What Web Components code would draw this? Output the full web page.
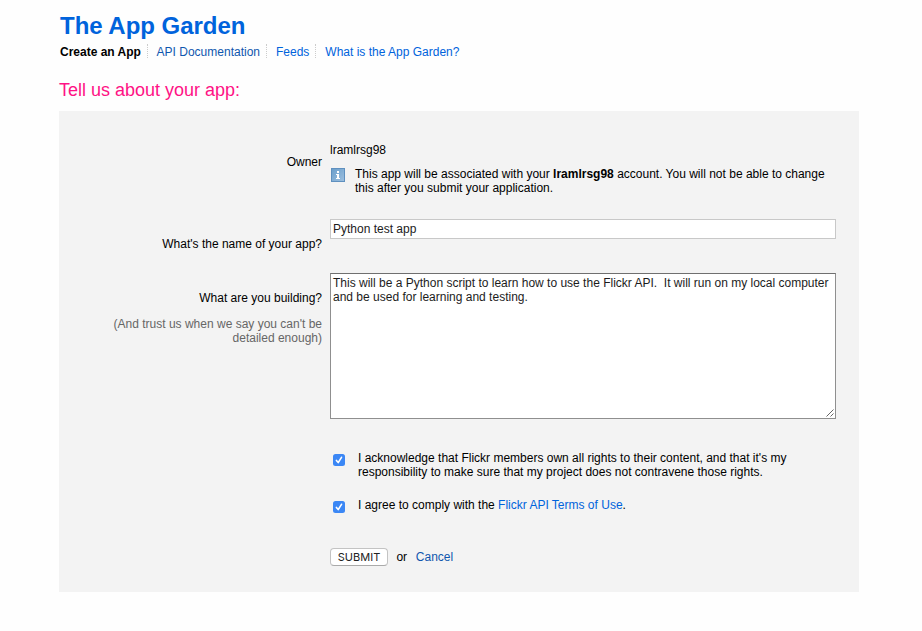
<!DOCTYPE html>
<html lang="en">
<head>
<meta charset="utf-8">
<title>The App Garden</title>
<style>
  body { margin: 0; width: 922px; height: 631px; overflow: hidden; background: #fefefe; color: #000;
    font: 12px/14px "Liberation Sans", Arial, sans-serif; }
</style>
</head>
<body>
<garden-page>
  <garden-nav slot="nav">
    <nav-item current>Create an App</nav-item>
    <nav-item style="--link:#1057ae">API Documentation</nav-item>
    <nav-item>Feeds</nav-item>
    <nav-item>What is the App Garden?</nav-item>
  </garden-nav>
  <form-row style="--top:32px;--label-top:12px;--height:76px">
    <span slot="label">Owner</span>
    <owner-note name="lramlrsg98"></owner-note>
  </form-row>
  <form-row style="--label-top:18px;--height:54px">
    <span slot="label">What's the name of your app?</span>
    <text-field>Python test app</text-field>
  </form-row>
  <form-row style="--label-top:18px;--height:178px">
    <span slot="label">What are you building?</span>
    <span slot="hint">(And trust us when we say you can't be detailed enough)</span>
    <text-field multiline>This will be a Python script to learn how to use the Flickr API.  It will run on my local computer and be used for learning and testing.</text-field>
  </form-row>
  <form-row style="--height:47px">
    <check-line>I acknowledge that Flickr members own all rights to their content, and that it's my responsibility to make sure that my project does not contravene those rights.</check-line>
  </form-row>
  <form-row style="--height:50px">
    <check-line>I agree to comply with the <link-text>Flickr API Terms of Use</link-text>.</check-line>
  </form-row>
  <form-row style="--height:20px">
    <form-actions></form-actions>
  </form-row>
</garden-page>
<script>
const element = (name, html, setup) => customElements.define(name, class extends HTMLElement {
  constructor() {
    super();
    this.attachShadow({ mode: "open" }).innerHTML = html;
  }
  connectedCallback() { if (setup) setup(this, this.shadowRoot); }
});

element("garden-page", `
  <style>
    :host { display: block; width: 800px; padding: 12px 0 0 59px; }
    h1 { margin: 0 0 0 1px; font-size: 24px; line-height: 28px; color: #0063dc; letter-spacing: -.03px; }
    h2 { margin: 19px 0 10px; font-size: 18px; line-height: 22px; font-weight: 400; color: #ff1285; }
    main { height: 481px; background: #f3f3f3; }
  </style>
  <h1>The App Garden</h1>
  <slot name="nav"></slot>
  <h2>Tell us about your app:</h2>
  <main><slot></slot></main>`);

element("garden-nav", `
  <style>:host { display: flex; margin: 4px 0 0 1px; height: 16px; }</style>
  <slot></slot>`);

element("nav-item", `
  <style>
    :host { display: block; white-space: nowrap; color: var(--link, #0063dc); padding: 1px 6px 0 0; height: 13px;
      border-right: 1px dotted #ccc; margin-right: 9px; }
    :host([current]) { color: #000; font-weight: 700; margin-right: 8.7px; }
    :host(:last-child) { border: 0; margin: 0; }
  </style>
  <slot></slot>`);

element("link-text", `
  <style>:host { color: var(--link, #0063dc); }</style>
  <slot></slot>`);

element("form-row", `
  <style>
    :host { display: grid; grid-template-columns: 263px 506px; column-gap: 8px;
      height: var(--height); padding-top: var(--top, 0); }
    .label { padding: var(--label-top, 0) 0 0 50px; text-align: right; }
    .hint { color: #666; margin-top: 12px; }
  </style>
  <div class="label"><slot name="label"></slot><div class="hint"><slot name="hint"></slot></div></div>
  <div><slot></slot></div>`);

element("owner-note", `
  <style>
    :host { display: block; }
    .note { display: flex; margin-top: 10px; gap: 10px; }
    svg { flex: none; margin: 1px 0 0 1px; }
    p { margin: 0; width: 480px; }
  </style>
  <div class="name"></div>
  <div class="note">
    <svg width="14" height="14" viewBox="0 0 14 14" shape-rendering="crispEdges">
      <defs><linearGradient id="g" x1="0" y1="0" x2="1" y2="1"><stop stop-color="#6b9fcb"/><stop offset="1" stop-color="#9cbfdf"/></linearGradient></defs>
      <rect width="14" height="14" fill="#5f90bf"/>
      <rect x="1" y="1" width="12" height="12" fill="url(#g)"/>
      <path d="M6 3h2v2H6zM5 6h3v4h1v1H5v-1h1V7H5z" fill="#fff"/>
    </svg>
    <p>This app will be associated with your <b></b> account. You will not be able to change this after you submit your application.</p>
  </div>`, (host, root) => {
    root.querySelector(".name").textContent = host.getAttribute("name");
    root.querySelector("b").textContent = host.getAttribute("name");
  });

element("text-field", `
  <style>
    :host { display: block; position: relative; box-sizing: border-box; width: 506px; height: 20px; padding: 2px;
      background: #fff; border: 1px solid #c8c8c8; color: #1c1c1c; }
    .value { white-space: pre-wrap; }
    :host([multiline]) { height: 146px; border-color: #6f6f6f #8f8f8f #8f8f8f; }
    svg { display: none; position: absolute; right: 1px; bottom: 1px; }
    :host([multiline]) svg { display: block; }
  </style><div class="value"><slot></slot></div><svg width="8" height="8" viewBox="0 0 8 8"><path d="M.5 7.5l7-7M4.5 7.5l3-3" stroke="#555" stroke-width=".9"/></svg>`);

element("check-line", `
  <style>
    :host { display: flex; gap: 13px; padding-left: 3px; }
    svg { flex: none; margin-top: 3px; }
    p { margin: 0; width: 450px; }
  </style>
  <svg width="12" height="12" viewBox="0 0 12 12">
    <rect width="12" height="12" rx="2.5" fill="#3b87f5"/>
    <path d="M3.4 6.4L5.2 8.6L8.5 3.3" fill="none" stroke="#fff" stroke-width="1.6" stroke-linecap="round" stroke-linejoin="round"/>
  </svg>
  <p><slot></slot></p>`);

element("form-actions", `
  <style>
    :host { display: flex; align-items: flex-start; }
    button { box-sizing: border-box; width: 58px; height: 18px; margin: 0 8.4px 0 0; padding: 0; border: 1px solid #c3c3c3;
      border-bottom-color: #aaa; border-radius: 4px; background: #fff; color: #222;
      font: 11px/15px Inter, sans-serif; letter-spacing: .05px; }
    span { margin: 2px 8.8px 0 0; }
    link-text { margin-top: 2px; --link: #1057ae; }
  </style>
  <button type="button">SUBMIT</button><span>or</span><link-text>Cancel</link-text>`);
</script>
</body>
</html>
